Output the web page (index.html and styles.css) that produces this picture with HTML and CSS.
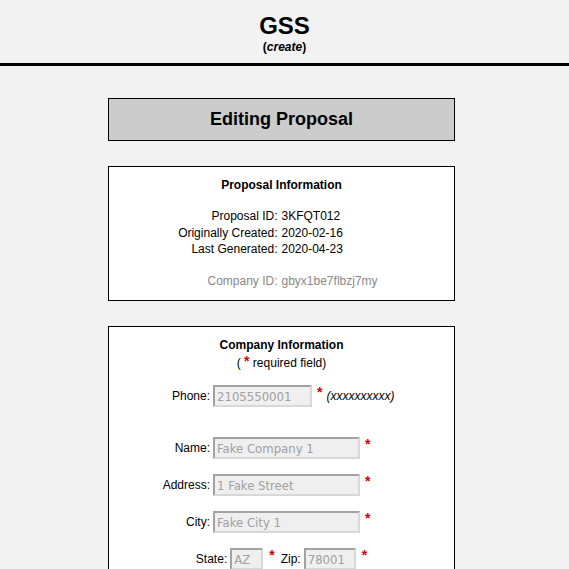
FILE: index.html
```html
<!DOCTYPE html>
<html>
<head>
<meta charset="utf-8">
<link rel="stylesheet" href="styles.css">
</head>
<body>
<header class="site-header">
  <h1 class="site-title">GSS</h1>
  <div class="site-mode">(<em>create</em>)</div>
</header>
<main class="content">
  <div class="page-title">Editing Proposal</div>

  <section class="panel info-panel">
    <h2 class="panel-title">Proposal Information</h2>
    <div class="info-grid">
      <span class="lbl">Proposal ID:</span><span class="val">3KFQT012</span>
      <span class="lbl">Originally Created:</span><span class="val">2020-02-16</span>
      <span class="lbl">Last Generated:</span><span class="val">2020-04-23</span>
    </div>
    <div class="info-grid muted">
      <span class="lbl">Company ID:</span><span class="val">gbyx1be7flbzj7my</span>
    </div>
  </section>

  <section class="panel form-panel">
    <h2 class="panel-title">Company Information</h2>
    <div class="req-note">( <span class="req">*</span> required field)</div>
    <div class="form-grid">
      <label class="flbl">Phone:</label>
      <div class="fcell"><input class="field w-phone" value="2105550001" disabled><span class="req">*</span><em class="hint">(xxxxxxxxxx)</em></div>
      <div class="spacer"></div>
      <label class="flbl">Name:</label>
      <div class="fcell"><input class="field w-long" value="Fake Company 1" disabled><span class="req">*</span></div>
      <label class="flbl">Address:</label>
      <div class="fcell"><input class="field w-long" value="1 Fake Street" disabled><span class="req">*</span></div>
      <label class="flbl">City:</label>
      <div class="fcell"><input class="field w-long" value="Fake City 1" disabled><span class="req">*</span></div>
    </div>
    <div class="state-row">
      <label class="flbl">State:</label><input class="field w-state" value="AZ" disabled><span class="req">*</span>
      <label class="flbl zip">Zip:</label><input class="field w-zip" value="78001" disabled><span class="req">*</span>
    </div>
  </section>
</main>
</body>
</html>
```
FILE: styles.css
```css
html, body {
  margin: 0;
  padding: 0;
  background: #f2f2f2;
  font-family: "Liberation Sans", Arial, sans-serif;
  font-size: 12px;
  color: #000;
}
.site-header {
  text-align: center;
  padding-top: 12px;
  padding-bottom: 9px;
  border-bottom: 3px solid #000;
}
.site-title {
  margin: 0;
  font-size: 24px;
  line-height: 28px;
  font-weight: bold;
}
.site-mode {
  font-weight: bold;
  font-size: 12px;
  line-height: 14px;
}
.content {
  width: 347px;
  margin-left: calc(50% - 176.5px);
  padding-top: 32px;
}
.page-title {
  background: #ccc;
  border: 1px solid #000;
  height: 41px;
  line-height: 41px;
  text-align: center;
  font-size: 18px;
  font-weight: bold;
  margin-bottom: 25px;
}
.panel {
  background: #fff;
  border: 1px solid #000;
  box-sizing: border-box;
}
.info-panel {
  height: 135px;
  padding-top: 11px;
  margin-bottom: 25px;
}
.panel-title {
  margin: 0;
  font-size: 12px;
  line-height: 15px;
  font-weight: bold;
  text-align: center;
}
.info-grid {
  display: grid;
  grid-template-columns: 1fr 1fr;
  column-gap: 4px;
  line-height: 16.5px;
  margin-top: 15px;
  padding-right: 4px;
}
.info-grid .lbl { text-align: right; }
.info-grid .val { text-align: left; }
.info-grid.muted {
  color: #888;
  margin-top: 15px;
}
.form-panel {
  padding-top: 11px;
  height: 260px;
}
.req-note {
  text-align: center;
  line-height: 15px;
  margin-top: 1px;
}
.req {
  color: #d40000;
  font-weight: bold;
  font-size: 14px;
}
.req-note .req { vertical-align: 1px; }
.form-grid {
  display: grid;
  grid-template-columns: 101px 1fr;
  column-gap: 3px;
  row-gap: 15px;
  margin-top: 14px;
  align-items: center;
}
.spacer {
  grid-column: 1 / -1;
  height: 0;
}
.flbl {
  text-align: right;
}
.fcell {
  display: flex;
  align-items: center;
}
.fcell .req {
  margin-left: 5px;
  align-self: flex-start;
  line-height: 14px;
}
.hint {
  margin-left: 4px;
}
.field {
  box-sizing: border-box;
  height: 22px;
  margin: 0;
  padding: 1px 2px 0;
  border: 2px solid;
  border-color: #a3a3a3 #d8d8d8 #d8d8d8 #a3a3a3;
  background: #efefef;
  color: #a0a0a0;
  font-family: "DejaVu Sans Condensed", "DejaVu Sans", Verdana, sans-serif;
  font-size: 13px;
}
.w-phone { width: 99px; }
.w-long { width: 147px; }
.w-state { width: 33px; }
.w-zip { width: 52px; }
.state-row {
  display: flex;
  justify-content: center;
  align-items: center;
  margin-top: 15px;
}
.state-row .flbl { margin-right: 3px; }
.state-row .req {
  margin-left: 6px;
  align-self: flex-start;
  line-height: 14px;
}
.state-row .zip { margin-left: 6px; }
```
